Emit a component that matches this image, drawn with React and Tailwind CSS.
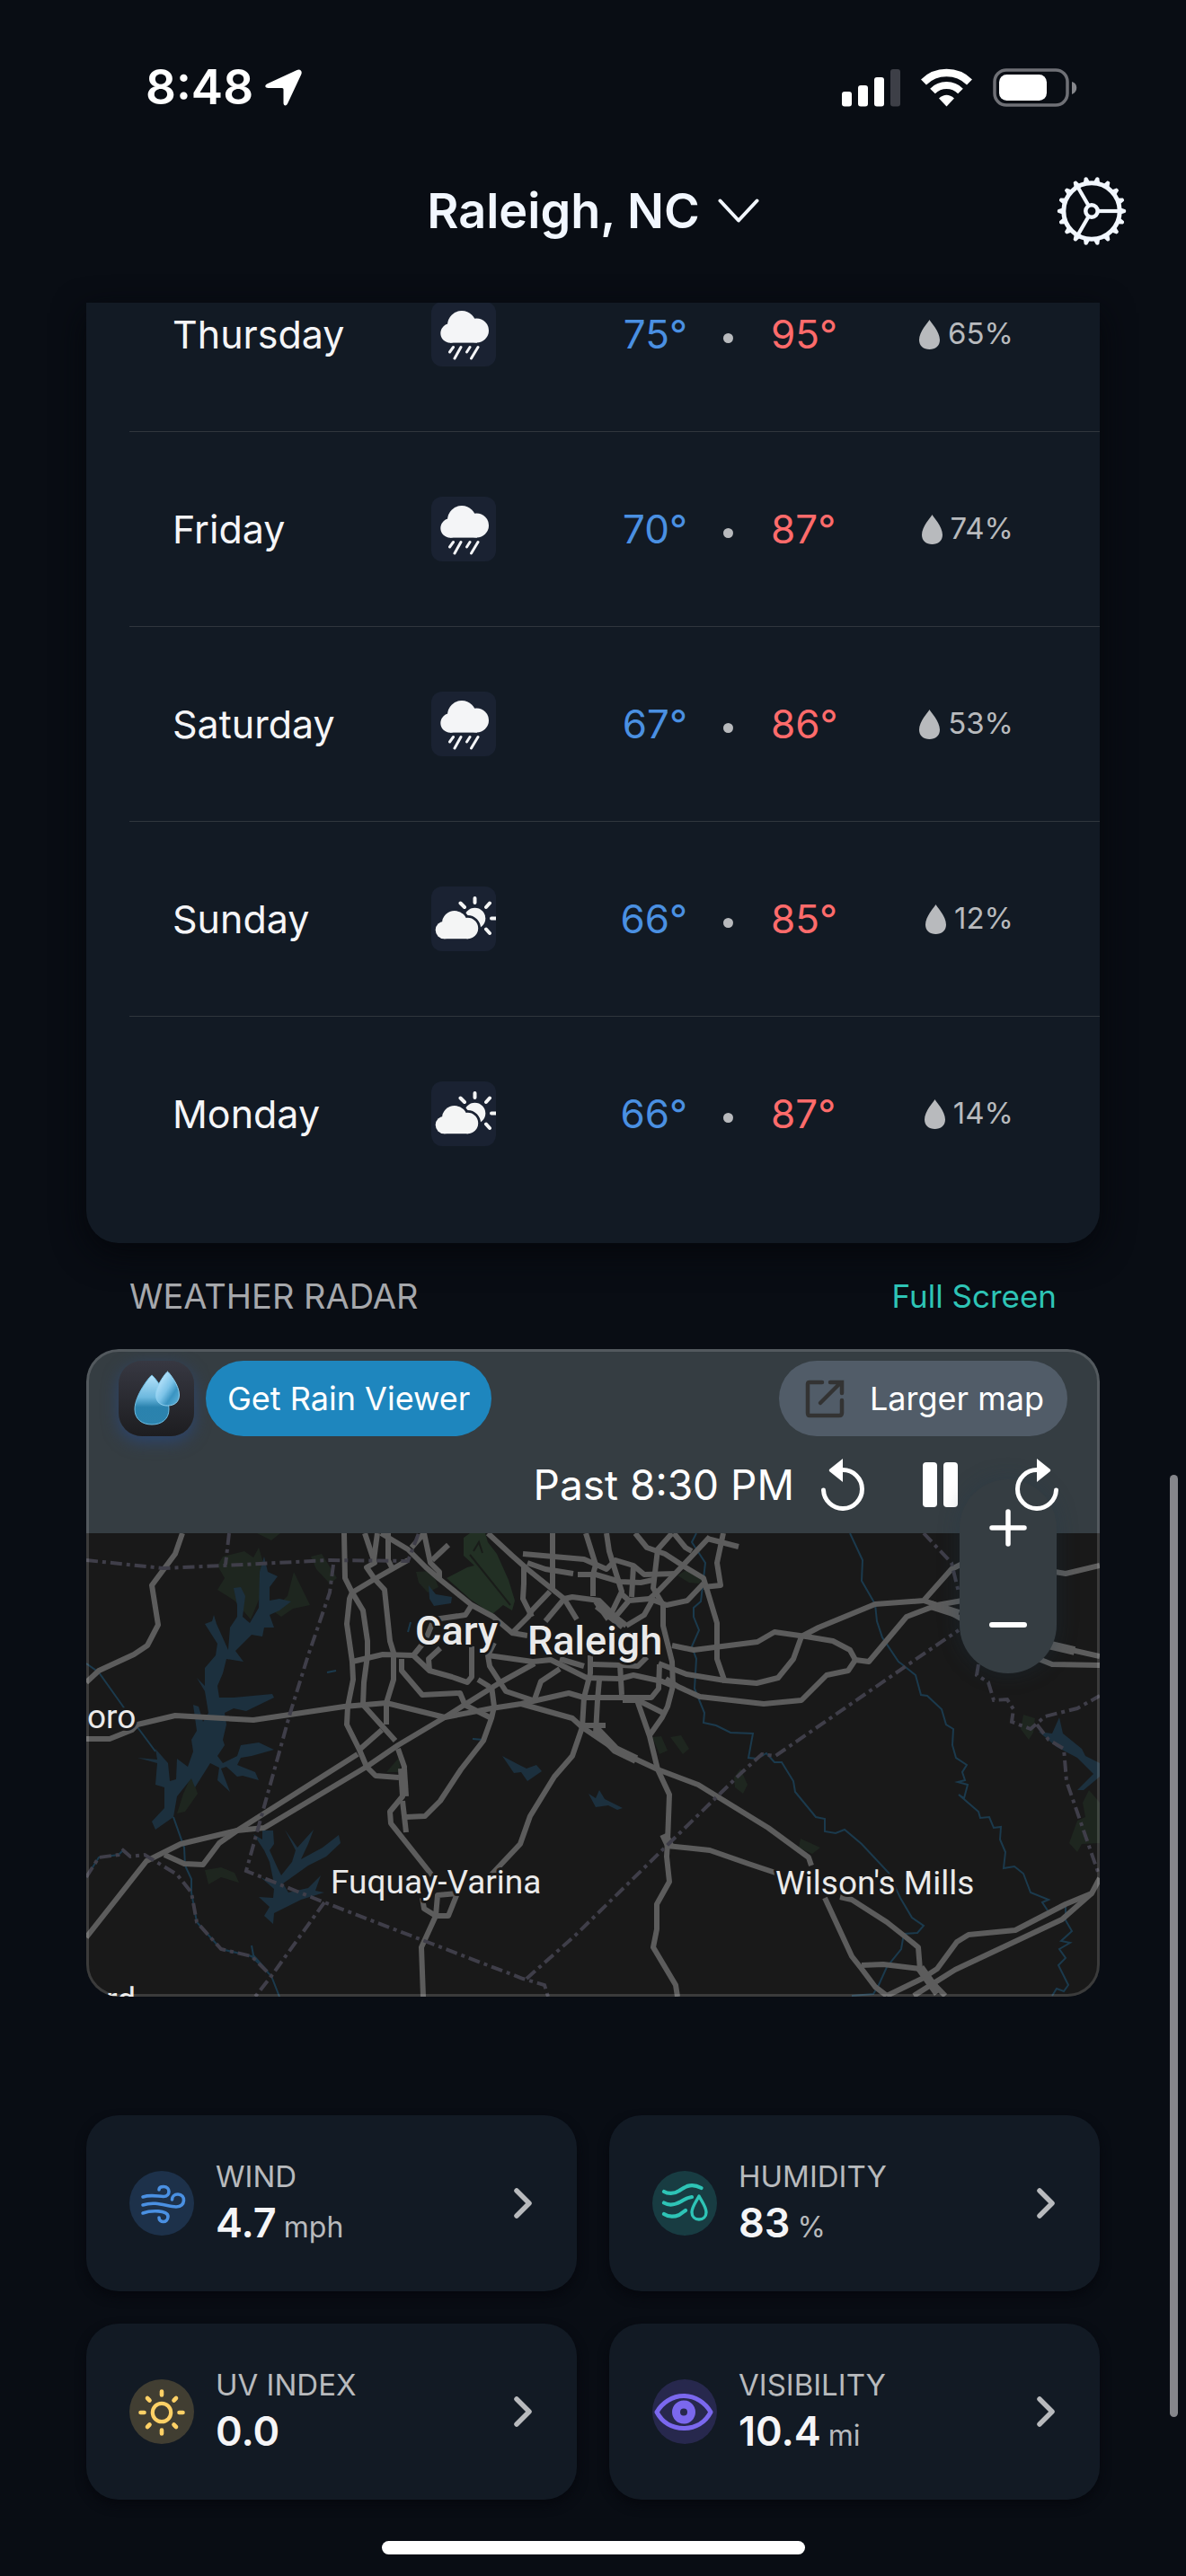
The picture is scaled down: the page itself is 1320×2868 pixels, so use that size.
import React from 'react'

const forecast = [
    { day: "Thursday", icon: "rain", low: 75, high: 95, chance: 65 },
    { day: "Friday", icon: "rain", low: 70, high: 87, chance: 74 },
    { day: "Saturday", icon: "rain", low: 67, high: 86, chance: 53 },
    { day: "Sunday", icon: "partly", low: 66, high: 85, chance: 12 },
    { day: "Monday", icon: "partly", low: 66, high: 87, chance: 14 },
];

const roads = [
    // west side
    "107,0 99,23 73,58 80,102 68,125 53,135 14,153 0,166",
    "0,229 26,229 51,219 57,213 99,203 186,208 287,193 334,189 399,205 451,195 484,190 537,178 554,183 597,183 629,183 637,173 638,146",
    "287,0 288,50 296,66 308,86 313,120 313,136 309,166 308,191 344,231",
    "296,66 293,73 290,101 296,143 297,163 291,193 290,213 304,241 312,260 322,270 348,272",
    "310,0 321,33 312,38 321,51 332,63 338,120 342,133 342,163 334,189 334,213",
    "324,0 320,30",
    "336,0 336,30 340,38",
    "358,30 321,51 296,66",
    "329,219 304,241",
    // I-40
    "328,0 358,18 378,38 393,51 429,80 453,93 474,111 492,93 496,86 516,65",
    "474,111 491,114",
    "362,16 376,0 383,33 393,43 393,51",
    "403,13 385,30",
    // US-70 and the northern grid
    "447,0 474,25 491,40 517,61 532,73 546,96",
    "519,0 519,63",
    "486,23 554,29 579,40 589,30 609,36 621,46 656,45",
    "556,0 567,35 564,46 564,70",
    "579,0 582,20 596,65 584,90 601,103",
    "491,33 511,40 542,45",
    "547,46 567,46 594,54 617,55 631,52",
    "609,36 607,71",
    "611,0 624,16 644,23 667,38 687,50 702,100 702,140 711,166",
    "652,0 636,18 631,61 642,80 642,103 652,143 653,170 647,193 641,205 627,225",
    "654,0 667,16 674,20",
    "709,0 702,33 706,58 687,60",
    "691,6 726,15",
    "694,4 664,36 636,65 627,73",
    "687,56 669,75 646,80 627,73 604,75 589,93",
    "631,73 621,91 601,103",
    "532,73 541,71 571,75 589,93",
    "532,73 511,98",
    "487,36 487,56 486,73 496,93",
    "567,76 581,96",
    "594,66 604,75",
    // east
    "652,125 676,130 747,121 766,110 801,115 831,120 850,130 856,141 871,143 913,93 947,80 975,75",
    "856,141 848,153 824,158 796,186 754,190 683,182 659,171 645,162",
    "796,115 815,105 878,79 932,75 963,40 975,34",
    "932,75 947,80 975,96",
    "796,115 787,140 770,161 746,167 711,164 668,157 637,145",
    "1078,43 1090,45 1128,36",
    "1070,124 1128,137",
    "1060,140 1075,146 1128,147",
    // center
    "447,136 497,143 517,141 557,161 594,162 609,158 641,165 653,170",
    "454,122 447,136 449,148 467,176 497,186",
    "499,145 461,166 421,191 399,205 347,236 312,260 198,328 168,331 105,346 67,365 0,450",
    "302,246 168,331 148,345 130,369 109,368 87,358",
    "484,190 541,206 552,216 589,241 636,263 681,280 759,328 804,361 807,370",
    "561,136 561,156 554,183 552,216 541,248 521,271 494,315 483,346 451,380",
    "571,163 569,186 567,223",
    "552,214 578,214",
    "594,146 596,180",
    "564,146 597,147 614,148 624,138",
    "612,183 627,226 636,263 649,291 647,343 646,360 649,388 635,413 635,441 631,461 656,503 658,516",
    "597,186 614,186 644,201",
    "646,348 694,353 737,368 767,378",
    "527,151 506,165 499,185",
    "527,140 554,148",
    "421,191 451,206",
    "451,170 454,193 451,206 442,231 417,263 394,298 377,315 356,316",
    "352,298 356,333",
    "347,240 354,260 352,293 338,310 339,323 385,381",
    "296,143 330,135 364,136 382,153 407,160 424,166 429,160 429,126",
    "436,163 449,171",
    "364,136 377,120 387,96 422,91 429,80",
    "382,153 381,140 394,128",
    "351,140 351,153 374,180 416,178 421,190",
    // Fuquay-Varina loop
    "374,406 376,418 389,426 403,426 413,401 391,403 389,426 373,461 375,516",
    // southeast interchange
    "839,405 852,408 891,433 910,448 926,461 928,486 956,515",
    "822,406 852,471 863,485 878,505 891,515",
    "863,481 887,480 928,485",
    "891,515 930,496 947,485 969,455 982,447 1034,442 1090,413 1119,401 1128,384",
    "921,515 967,486 1086,430 1119,401",
];

const wideRoads = [
    "567,218 589,241 612,252",
    "352,262 354,293",
    "643,335 650,350",
    "928,484 948,512",
    "569,80 598,103",
    "971,90 940,80",
    "1070,124 1100,131",
];

const boundaries = [
    "0,30 85,39 154,36 271,30 358,31 370,0",
    "159,0 155,35",
    "275,35 271,66 247,136 227,200 190,333 178,376 265,411 374,453 486,496 510,503 514,516",
    "265,411 206,493 188,516",
    "0,383 14,361 36,358 41,353 49,360 65,358 101,380 117,400 123,433 150,463 184,471 206,493",
    "490,496 544,448 648,346 730,266 752,246 767,248 934,133 971,108",
    "932,0 963,33 971,66",
    "993,146 991,158 1004,166 1010,186 1025,185 1032,196 1030,210 1051,218 1067,204 1103,195 1128,181",
    "1058,213 1071,230 1088,240 1091,276 1127,380",
];

const rivers = [
    "0,145 14,155 41,193 57,216 77,243",
    "97,316 109,350 110,370 117,385 117,400 123,433 150,463 184,471 206,493 215,516",
    "0,383 14,361 36,358 41,353",
    "184,459 186,470 202,488",
    "850,0 864,30 863,53 878,79 880,98 886,116 904,143 908,146 923,158 929,180 936,181 952,196 957,213 965,218 964,236 968,250 980,258 975,266 978,275 970,277 981,280 977,295 971,291 993,310 995,317 1005,316 1010,328 1018,327 1017,341 1023,355 1021,373 1033,371 1043,379 1051,400 1071,408 1064,411 1070,420",
    "1090,415 1090,431 1097,443 1085,454 1095,456 1083,463 1090,473 1082,481 1093,503 1088,510 1080,507 1075,515",
    "679,0 674,10 689,33 684,76 676,83 676,93 682,108 674,126 679,140 677,173 688,200 687,211 701,214 717,222 742,223 737,250 747,251 757,245 766,255 774,255 787,276 789,288 812,316 822,318 822,332 834,334 844,330 863,346 893,378 906,406 919,428 932,437 925,445 910,446 907,463 891,483 882,503 876,513 852,515",
    "268,155 278,153",
    "358,110 361,99",
    "430,229 442,230",
];

const lakes = [
    "132,163 132,150 144,136 146,123 132,101 140,98 142,91 145,101 158,130 160,105 168,93 168,80 164,61 172,60 177,70 174,93 182,100 192,83 193,43 198,26 202,43 213,48 204,60 204,75 215,73 228,76 215,86 204,91 209,105 198,105 196,115 184,113 166,131 175,143 156,140 152,156 146,170 148,183 164,183 207,179 209,183 178,198 164,195 154,200 156,213 152,230 154,236 146,248 152,256 168,248 172,236 192,233 209,241 184,248 172,250 168,258 188,266 192,275 174,270 168,271 156,260 150,262 160,288 146,275 148,261 138,256 121,283 117,273 101,293 97,316 77,330 73,321 87,306 87,283 77,280 79,256 57,250 79,252 77,240 91,256 93,276 100,274 101,251 113,260 119,243 117,230 123,220 119,191 125,193 130,210 136,200 132,176 123,161 132,170",
    "186,335 196,341 196,331 208,331 209,346 204,353 213,373 217,381 229,366 233,353 221,330 235,350 253,330 247,346 239,363 263,350 281,336 283,345 267,360 247,370 219,390 225,400 247,395 261,381 255,398 265,400 239,408 209,423 208,435 198,426 204,416 192,405 208,406 209,396 194,383 209,390 204,366 198,353",
    "382,73 381,58 389,68 407,71 406,78 387,81",
    "463,248 480,257 490,262 501,258 507,265 491,276 484,266 476,267",
    "559,290 567,295 571,286 577,296 597,306 591,308 581,303 567,305",
    "1060,221 1075,223 1083,205 1087,223 1108,240 1112,248 1128,256 1128,271 1110,286 1103,286 1121,268 1103,250 1080,238",
];

const woods = [
    "152,26 176,20 186,27 192,16 202,50 183,96 165,75 146,63 154,50 146,36",
    "231,43 249,80 230,84 217,93 207,86 224,70",
    "250,26 262,23 279,50 271,56 256,40",
    "190,0 216,0 206,8",
    "117,270 124,290 110,310 101,312 108,290",
    "132,375 150,372 165,378 170,389 150,383 136,391",
    "367,43 385,42 392,60 380,66 370,55",
    "334,266 348,250 350,266",
    "658,47 668,41 687,50 682,56 671,55",
    "630,227 640,226 647,242 638,246",
    "650,227 662,225 671,240 664,246",
    "721,272 728,262 736,280 731,290 722,283",
    "795,340 817,350 808,357 793,350",
    "1043,202 1056,206 1054,222 1049,230 1040,218",
    "1116,286 1128,300 1128,345 1108,346 1103,355 1094,345 1103,320 1112,316 1109,300",
];

const airport = "427,0 444,0 447,10 457,23 470,52 477,75 474,86 464,80 452,90 428,74 401,50 424,38 432,36 420,25 420,5";

const RainIcon = () => (
    <svg viewBox="0 0 72 72" className="size-[72px]">
        <g fill="#f4f5f7">
            <circle cx="34" cy="26" r="16" />
            <circle cx="50.5" cy="32" r="13.5" />
            <circle cx="21" cy="35" r="10.7" />
            <rect x="21" y="28" width="30" height="17.6" />
        </g>
        <path
            d="M24.5 50.500L20.500 56M33 50.500L26 63M43 50.500L39.500 56M52 50.500L44.500 63"
            stroke="#f4f5f7"
            strokeWidth="3"
            strokeLinecap="round"
        />
    </svg>
);

const PartlyIcon = () => (
    <svg viewBox="0 0 72 72" className="size-[72px]">
        <circle cx="48.500" cy="35.500" r="11.800" fill="#f4f5f5" />
        <path
            d="M48.500 13V18M65 18.500L61 23M67 35.500H74M61 47.500L65 52M32.500 18.500L37 23"
            stroke="#f4f5f5"
            strokeWidth="4"
            strokeLinecap="round"
        />
        <g stroke="#1a2232" strokeWidth="6" fill="#1a2232">
            <circle cx="26" cy="41" r="14" />
            <circle cx="40.500" cy="46.500" r="11.500" />
        </g>
        <g fill="#f4f5f5">
            <circle cx="26" cy="41" r="14" />
            <circle cx="40.500" cy="46.500" r="11.700" />
            <circle cx="14.500" cy="48.500" r="9.800" />
            <rect x="14" y="42" width="27" height="16.200" />
        </g>
    </svg>
);

const DropIcon = () => (
    <svg viewBox="0 0 23 33" className="h-[33px] w-[23px]">
        <path d="M11.500 0C13 3 23 13 23 22.500C23 29 18 33 11.500 33C5 33 0 29 0 22.500C0 13 10 3 11.500 0Z" fill="#b8babd" />
    </svg>
);

const GearIcon = () => (
    <svg viewBox="-39 -39 78 78" className="size-[78px]">
        <circle r="31.200" fill="none" stroke="#f2f7ff" strokeWidth="5" />
        {Array.from({ length: 18 }, (_, i) => (
            <path
                key={i}
                d="M31 -4L37.600 -1.800Q39 0 37.600 1.800L31 4Z"
                fill="#f2f7ff"
                transform={`rotate(${i * 20})`}
            />
        ))}
        <circle r="6.700" fill="none" stroke="#f2f7ff" strokeWidth="4.500" />
        {[0, 120, 240].map((angle) => (
            <path key={angle} d="M8 0H30" stroke="#f2f7ff" strokeWidth="4.200" transform={`rotate(${angle})`} />
        ))}
    </svg>
);

const StatusBar = () => (
    <div className="flex items-center justify-between pt-16 pr-[121px] pl-[162px]">
        <div className="flex h-[68px] items-center gap-3 text-[53px] font-semibold text-white">
            <span>8:48</span>
            <svg viewBox="0 0 42 42" className="size-[42px]">
                <path d="M40.500 1.200C42 2.500 42 4 41.200 6L26 38.500C24.500 41.500 21.500 41 21.500 37.500V22.500Q21.500 21 20 21H4.500C1 21 0 18 3.500 16.300L36 1.200C38 .3 39.500 .2 40.500 1.200Z" fill="#fff" />
            </svg>
        </div>
        <svg viewBox="0 0 262 44" className="h-[44px] w-[262px]">
            <rect x="0" y="26" width="11" height="16.500" rx="3" fill="#fff" />
            <rect x="18" y="19" width="11" height="23.500" rx="3" fill="#fff" />
            <rect x="36" y="10" width="11" height="32.500" rx="3" fill="#fff" />
            <rect x="54" y="1" width="11" height="41.500" rx="3" fill="#3d3f47" />
            <g fill="none" stroke="#fff">
                <path d="M91 15.500A36.500 36.500 0 0 1 142 15.500" strokeWidth="8.500" />
                <path d="M101 25.500A22 22 0 0 1 132 25.500" strokeWidth="8" />
            </g>
            <path d="M108 33.500Q116.500 26 125 33.500L116.500 42.500Z" fill="#fff" />
            <rect x="170" y="2" width="81" height="39" rx="13" fill="none" stroke="#6f7076" strokeWidth="3.500" />
            <rect x="175" y="7" width="53" height="29" rx="8.500" fill="#fff" />
            <path d="M256 15C263 17 263 26 256 29Z" fill="#85868b" />
        </svg>
    </div>
);

const Header = () => (
    <header className="grid h-[205px] grid-cols-[1fr_auto_1fr] items-center pr-[66px] pl-[66px]">
        <span />
        <button className="flex items-center gap-5 text-[54px] font-semibold text-[#f2f7ff]">
            <span>Raleigh, NC</span>
            <svg viewBox="0 0 46 28" className="h-[28px] w-[46px]">
                <path d="M2.500 2.500L23 24.500L43.500 2.500" fill="none" stroke="#f2f7ff" strokeWidth="4" strokeLinecap="round" strokeLinejoin="round" />
            </svg>
        </button>
        <button aria-label="Settings" className="justify-self-end">
            <GearIcon />
        </button>
    </header>
);

const DayRow = ({ day, icon, low, high, chance }) => (
    <li className="ml-12 flex h-[217px] items-center border-b border-[#30363d] pr-24 pl-12 text-[44px] first:-mt-[73px] last:border-transparent">
        <span className="w-[288px] text-[43px] text-[#f5f5f7]">{day}</span>
        <span className="size-[72px] overflow-hidden rounded-xl bg-[#1a2232]">
            {icon === "rain" ? <RainIcon /> : <PartlyIcon />}
        </span>
        <span className="ml-auto w-[120px] text-right text-[#4a90e2]">{low}°</span>
        <span className="mt-2 mr-[42px] ml-10 size-[11px] rounded-full bg-[#b8babd]" />
        <span className="w-[120px] text-[#ff6b6b]">{high}°</span>
        <span className="flex w-[150px] items-center justify-end gap-[9px] text-[33px] text-[#b8babd]">
            <DropIcon />
            {chance}%
        </span>
    </li>
);

const Poly = ({ list, ...rest }) => (
    <g fill="none" {...rest}>
        {list.map((points) => (
            <polyline key={points} points={points} />
        ))}
    </g>
);

const RadarMap = () => (
    <svg viewBox="0 0 1128 516" className="block w-full bg-[#191919]">
        {woods.map((points) => (
            <polygon key={points} points={points} fill="#1e261f" />
        ))}
        <polygon points={airport} fill="#223024" />
        <path d="M427 24L472 80M431 20L437 10L441 22" stroke="#191c19" strokeWidth="2" fill="none" />
        {lakes.map((points) => (
            <polygon key={points} points={points} fill="#1c303e" />
        ))}
        <Poly list={rivers} stroke="#1b3a4d" strokeWidth="2" />
        <Poly list={roads} stroke="#5c5c5c" strokeWidth="6" strokeLinejoin="round" />
        <Poly list={wideRoads} stroke="#5c5c5c" strokeWidth="10" />
        <Poly list={boundaries} stroke="#3f3e49" strokeWidth="4" strokeDasharray="13 5 4 5" />
        <g
            fill="#eaeaea"
            stroke="#191919"
            strokeWidth="6"
            strokeLinejoin="round"
            paintOrder="stroke"
            className="font-[Roboto,sans-serif]"
        >
            <g className="text-[45px] font-medium">
                <text x="366" y="124">Cary</text>
                <text x="491" y="135">Raleigh</text>
            </g>
            <g className="text-[37px]">
                <text x="272" y="401">Fuquay-Varina</text>
                <text x="767" y="402">Wilson's Mills</text>
                <text x="1" y="217">oro</text>
                <text x="55" y="532" textAnchor="end">rd</text>
            </g>
        </g>
    </svg>
);

const RainViewerLogo = () => (
    <svg viewBox="0 0 84 84" className="size-[84px] rounded-[26px] shadow-[0_6px_18px_#2c456e]">
        <defs>
            <linearGradient id="tile" x1="0" y1="0" x2="0" y2="1">
                <stop offset="0" stopColor="#373842" />
                <stop offset="1" stopColor="#1d1d20" />
            </linearGradient>
            <linearGradient id="drop" x1="0" y1="0" x2="0" y2="1">
                <stop offset="0" stopColor="#b5e2fa" />
                <stop offset=".45" stopColor="#6cb8de" />
                <stop offset=".65" stopColor="#2a82ae" />
                <stop offset="1" stopColor="#2c83ad" />
            </linearGradient>
            <linearGradient id="smallDrop" x1="0" y1="0" x2="1" y2="1">
                <stop offset=".2" stopColor="#b5e2fa" />
                <stop offset=".5" stopColor="#7cc3e8" />
                <stop offset=".7" stopColor="#3a94c2" />
                <stop offset="1" stopColor="#62b4da" />
            </linearGradient>
        </defs>
        <rect width="84" height="84" fill="url(#tile)" />
        <path d="M37 16C39 17 56 38 56 54C56 65 48 71 37 71C26 71 18 65 18 54C18 38 35 17 37 16Z" fill="url(#drop)" stroke="#6fc0e6" strokeWidth="1" />
        <path d="M54.500 12C56 13 67.500 27 67.500 38C67.500 46 62 50 54.500 50C47 50 41.500 46 41.500 38C41.500 27 53 13 54.500 12Z" fill="url(#smallDrop)" stroke="#8fd0f0" strokeWidth="1" />
    </svg>
);

const RotateIcon = ({ className }) => (
    <svg viewBox="0 0 48 58" className={`h-[58px] w-[48px] ${className}`}>
        <path d="M2.500 35A21.500 21.500 0 1 0 24 12.500" fill="none" stroke="#fff" strokeWidth="5" strokeLinecap="round" />
        <path d="M24 0V26L9 14Q8.500 13 9 12Z" fill="#fff" />
    </svg>
);

const Radar = () => (
    <section className="relative overflow-hidden rounded-[36px] bg-[#353d42]">
        <div className="flex items-center gap-[13px] px-9 pt-[13px]">
            <RainViewerLogo />
            <a href="#rain-viewer" className="flex h-[84px] items-center rounded-full bg-[#1e86be] px-6 text-[36px] text-white">
                Get Rain Viewer
            </a>
            <a href="#larger-map" className="ml-auto flex h-[84px] items-center gap-7 rounded-full bg-[#515c68] pr-[26px] pl-[29px] text-[36px] text-white">
                <svg viewBox="0 0 44 44" className="size-[44px]" fill="none" stroke="#333" strokeWidth="4.500" strokeLinecap="round">
                    <path d="M19 4H5Q3 4 3 6V38Q3 41 5 41H38Q41 41 41 38V24" />
                    <path d="M17 27L39 5M28 4H41V16" />
                </svg>
                Larger map
            </a>
        </div>
        <div className="flex h-[108px] items-center justify-end pr-4">
            <span className="text-[46px] text-white">Past 8:30 PM</span>
            <button aria-label="Step back" className="flex size-[108px] items-center justify-center">
                <RotateIcon className="" />
            </button>
            <button aria-label="Pause" className="flex size-[108px] items-center justify-center gap-[7px]">
                <span className="h-[50px] w-4 rounded-sm bg-white" />
                <span className="h-[50px] w-4 rounded-sm bg-white" />
            </button>
            <button aria-label="Step forward" className="z-10 flex size-[108px] items-center justify-center">
                <RotateIcon className="-scale-x-100" />
            </button>
        </div>
        <RadarMap />
        <div className="absolute top-[145px] right-12 flex flex-col rounded-full bg-[#353d42] shadow-[0_0_24px_#1e3a4a55]">
            <button aria-label="Zoom in" className="flex size-[108px] items-center justify-center">
                <svg viewBox="0 0 42 42" className="size-[42px]">
                    <path d="M3 21H39M21 3V39" stroke="#fff" strokeWidth="5.500" strokeLinecap="round" />
                </svg>
            </button>
            <button aria-label="Zoom out" className="flex size-[108px] items-center justify-center">
                <svg viewBox="0 0 42 42" className="size-[42px]">
                    <path d="M3 21H39" stroke="#fff" strokeWidth="6" strokeLinecap="round" />
                </svg>
            </button>
        </div>
        <div className="pointer-events-none absolute inset-0 rounded-[36px] border-[3px] border-white/15" />
    </section>
);

const WindIcon = () => (
    <svg viewBox="0 0 72 72" fill="none" stroke="#4a90e2" strokeWidth="3.600" strokeLinecap="round">
        <path d="M15 29C24 26 32 28.500 38 28.500C46 28.500 46 17.500 38 17.500C34.500 17.500 33 19 33 21" />
        <path d="M15 38C30 33 42 40 52 40C63 40 63 26 54 26C50 26 47.500 28.500 47.500 32" />
        <path d="M15 47C23 44 43.500 43 43 51C42.500 58.500 33 58 33 52" />
    </svg>
);

const HumidityIcon = () => (
    <svg viewBox="0 0 72 72" fill="none" stroke="#2ec4b6" strokeWidth="4.200" strokeLinecap="round">
        <path d="M13 23C17 25.500 24 26 30 22C38 16 45 14 54.500 19" />
        <path d="M13 35.500C19 39 25 38 32 34Q38 30 44 29" />
        <path d="M13 48C19 52 25 51 30 49L37 44" />
        <path d="M52 28C55 34 60 40 60 46C60 51 56.500 54 52 54C47.500 54 44 51 44 46C44 40 49 34 52 28Z" strokeWidth="3.400" strokeLinejoin="round" />
    </svg>
);

const UvIcon = () => (
    <svg viewBox="0 0 72 72" fill="none" stroke="#ffd166" strokeLinecap="round">
        <circle cx="36" cy="37" r="10.200" strokeWidth="4.200" />
        <path
            d="M36 13.500V17.500M36 56.500V60.500M12.500 37H16.500M55.500 37H59.500M20 21L22.500 23.500M52 21L49.500 23.500M20 53L22.500 50.500M52 53L49.500 50.500"
            strokeWidth="4.600"
        />
    </svg>
);

const EyeIcon = () => (
    <svg viewBox="0 0 72 72" fill="none" stroke="#7b68ee">
        <path d="M5 36.500C11 26 22 18.500 35 18.500C48 18.500 59 26 65 36.500C59 48 48 54.500 35 54.500C22 54.500 11 48 5 36.500Z" strokeWidth="5" strokeLinejoin="round" />
        <circle cx="35" cy="36.500" r="8.500" strokeWidth="9" />
    </svg>
);

const stats = [
    { label: "WIND", value: "4.7", unit: "mph", Icon: WindIcon, bg: "bg-[#1d314a]" },
    { label: "HUMIDITY", value: "83", unit: "%", Icon: HumidityIcon, bg: "bg-[#183c42]" },
    { label: "UV INDEX", value: "0.0", unit: "", Icon: UvIcon, bg: "bg-[#413e32]" },
    { label: "VISIBILITY", value: "10.4", unit: "mi", Icon: EyeIcon, bg: "bg-[#27284d]" },
];

const StatCard = ({ label, value, unit, Icon, bg }) => (
    <button className="flex h-[196px] items-center gap-6 rounded-[36px] bg-[#121a24] pr-[50px] pl-12 text-left shadow-[0_6px_12px_#06080e]">
        <span className={`size-[72px] rounded-full ${bg}`}>
            <Icon />
        </span>
        <span className="flex-1">
            <span className="block text-[33px] leading-[44px] text-[#b8babd]">{label}</span>
            <span className="flex items-baseline gap-2 text-[45px] leading-[60px] font-semibold text-[#f5f5f7]">
                {value}
                {unit && <span className="text-[32px] leading-none font-normal text-[#b8babd]">{unit}</span>}
            </span>
        </span>
        <svg viewBox="0 0 20 34" className="h-[34px] w-[20px]">
            <path d="M3 3L17 17L3 31" fill="none" stroke="#b8babd" strokeWidth="5.500" strokeLinecap="round" strokeLinejoin="round" />
        </svg>
    </button>
);

const App = () => {
    return (
        <div className="relative min-h-screen bg-[#090d14] font-[Inter,sans-serif]">
            <StatusBar />
            <Header />

            <main className="px-24">
                <ul className="overflow-hidden rounded-b-[36px] bg-[#121a24] pb-[35px] shadow-[0_12px_36px_#05070c]">
                    {forecast.map((item) => (
                        <DayRow key={item.day} {...item} />
                    ))}
                </ul>

                <div className="flex h-[118px] items-center justify-between px-12">
                    <h2 className="text-[38px] text-[#a6a8ac]">WEATHER RADAR</h2>
                    <a href="#full-screen" className="text-[35px] text-[#2ec4b6]">Full Screen</a>
                </div>

                <Radar />

                <div className="mt-[132px] grid grid-cols-2 gap-9">
                    {stats.map((item) => (
                        <StatCard key={item.label} {...item} />
                    ))}
                </div>
            </main>

            <div className="flex justify-center pt-[46px] pb-6">
                <div className="h-[15px] w-[471px] rounded-full bg-white" />
            </div>

            {/* scroll indicator */}
            <div className="absolute top-[1642px] right-[9px] h-[1049px] w-[9px] rounded-full bg-[#85868b]" />
        </div>
    )
}

export default App
